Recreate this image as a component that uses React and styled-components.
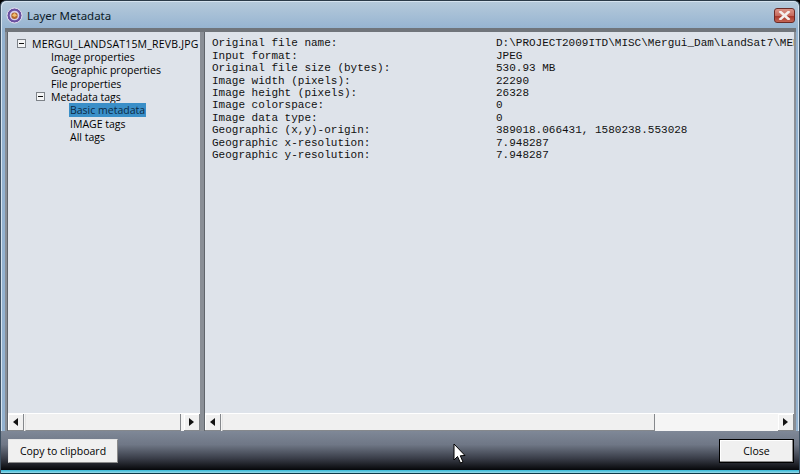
import React from "react";
import styled, { createGlobalStyle } from "styled-components";

const properties = [
  ["Original file name:", "D:\\PROJECT2009ITD\\MISC\\Mergui_Dam\\LandSat7\\MERGUI_LANDSAT15M_REVB.JPG"],
  ["Input format:", "JPEG"],
  ["Original file size (bytes):", "530.93 MB"],
  ["Image width (pixels):", "22290"],
  ["Image height (pixels):", "26328"],
  ["Image colorspace:", "0"],
  ["Image data type:", "0"],
  ["Geographic (x,y)-origin:", "389018.066431, 1580238.553028"],
  ["Geographic x-resolution:", "7.948287"],
  ["Geographic y-resolution:", "7.948287"],
];

const GlobalStyle = createGlobalStyle`
  html, body {
    margin: 0;
    padding: 0;
    background: #000;
    overflow: hidden;
  }
`;

const Window = styled.div`
  width: 800px;
  height: 474px;
  box-sizing: border-box;
  display: flex;
  flex-direction: column;
  font-family: "Open Sans", "Liberation Sans", sans-serif;
  font-size: 10.5px;
  color: #000;
  background: linear-gradient(#b6cadb 0, #93b2d0 30px, #93b2d0 100%);
  border-top: 1px solid #2b3a48;
  border-left: 1px solid #3d4f60;
  border-right: 1px solid #3d4f60;
  border-radius: 6px 6px 0 0;
  box-shadow: inset 1px 1px 0 #d5e3ef, inset -1px 0 0 #d5e3ef;
`;

const TitleBar = styled.div`
  height: 27px;
  box-sizing: border-box;
  flex: none;
  display: flex;
  align-items: center;
  padding: 2px 4px 0 5px;
  gap: 4px;
`;

const Title = styled.span`
  flex: 1;
  font-family: "Noto Sans", "Liberation Sans", sans-serif;
  font-size: 11.5px;
  color: #0c1a26;
`;

const CloseX = styled.div`
  width: 19px;
  height: 13px;
  border: 1px solid #6b2a26;
  border-radius: 3px;
  background: linear-gradient(#dd9488 0%, #c66a5e 50%, #a8362a 55%, #c46656 100%);
  display: flex;
  align-items: center;
  justify-content: center;
`;

const Body = styled.div`
  flex: 1;
  min-height: 0;
  margin: 0 3px 0 4px;
  padding: 0 2px;
  display: flex;
  gap: 4px;
  background: #8a8f96;
  border-top: 4px solid #70757b;
`;

const Pane = styled.div`
  flex: ${(p) => (p.$wide ? "1" : "none")};
  width: ${(p) => (p.$wide ? "auto" : "192px")};
  min-width: 0;
  display: flex;
  flex-direction: column;
  background: #dee3ea;
  border-left: 1px solid #60656b;
`;

const Content = styled.div`
  flex: 1;
  min-height: 0;
  overflow: hidden;
`;

const TreeRow = styled.div`
  height: 13.33px;
  display: flex;
  align-items: center;
  white-space: nowrap;
  padding-left: ${(p) => p.$indent}px;
`;

const Tree = styled(Content)`
  padding: 5px 0 0 9px;
`;

const Expander = styled.span`
  width: 7px;
  height: 7px;
  margin-right: 5px;
  border: 1px solid #7d8288;
  background: #f4f5f6;
  display: flex;
  align-items: center;
  justify-content: center;
  &::after {
    content: "";
    width: 5px;
    height: 1px;
    background: #111;
  }
`;

const Label = styled.span`
  padding: 0 1px;
  line-height: 14px;
  letter-spacing: ${(p) => (p.$caps ? "0.2px" : "0")};
  background: ${(p) => (p.$selected ? "#3a8fc8" : "transparent")};
  color: ${(p) => (p.$selected ? "#0c2a45" : "#000")};
`;

const Metadata = styled(Content)`
  padding: 5.3px 0 0 7px;
  font-family: "Liberation Mono", "Courier New", monospace;
  font-size: 11px;
  color: #111;
`;

const MetaRow = styled.div`
  height: 12.44px;
  line-height: 12.44px;
  display: flex;
  white-space: pre;
`;

const MetaKey = styled.span`
  width: 284px;
  flex: none;
`;

const ScrollBar = styled.div`
  height: 17px;
  flex: none;
  display: flex;
  background: #f5f5f5;
  border-top: 1px solid #ffffff;
`;

const ScrollButton = styled.div`
  width: 16px;
  flex: none;
  box-sizing: border-box;
  background: #f0f0f0;
  border-right: 1px solid #85888c;
  border-bottom: 1px solid #85888c;
  box-shadow: inset 1px 1px 0 #fff;
  display: flex;
  align-items: center;
  justify-content: center;
  &::after {
    content: "";
    border-top: 4px solid transparent;
    border-bottom: 4px solid transparent;
    border-left: ${(p) => (p.$right ? "5px solid #111" : "0")};
    border-right: ${(p) => (p.$right ? "0" : "5px solid #111")};
  }
`;

const Track = styled.div`
  flex: 1;
  display: flex;
`;

const Thumb = styled.div`
  width: ${(p) => p.$width}px;
  margin-left: 1px;
  box-sizing: border-box;
  background: #f0f0f0;
  border-left: 1px solid #e4e4e4;
  border-right: 1px solid #85888c;
  border-bottom: 1px solid #85888c;
`;

const Footer = styled.div`
  height: 39px;
  flex: none;
  padding: 8px 5px 0 7px;
  box-sizing: border-box;
  display: flex;
  justify-content: space-between;
  align-items: flex-start;
  position: relative;
  background: linear-gradient(#7f8897 0%, #6f7786 35%, #3a3e49 70%, #06070a 100%);
`;

const Button = styled.button`
  height: 24px;
  width: ${(p) => p.$width}px;
  padding: 0;
  font-family: "Open Sans", "Liberation Sans", sans-serif;
  font-size: 10.5px;
  color: #000;
  background: #f0f0f0;
  border: 1px solid ${(p) => (p.$default ? "#000" : "#e6e6e6")};
  border-right-color: ${(p) => (p.$default ? "#000" : "#8a8a8a")};
  border-bottom-color: ${(p) => (p.$default ? "#000" : "#8a8a8a")};
  box-shadow: ${(p) => (p.$default ? "inset -1px -1px 0 #8a8a8a, inset 1px 1px 0 #fff" : "none")};
`;

const Pointer = styled.svg`
  position: absolute;
  left: 452px;
  top: 12px;
`;

const BottomEdge = styled.div`
  height: 3px;
  flex: none;
  background: linear-gradient(#2fb7d6, #9ad9e8);
  border-bottom: 1px solid #0e3b49;
`;

const AppIcon = () => (
  <svg width="17" height="17" viewBox="0 0 17 17">
    <circle cx="8.5" cy="8.5" r="7.5" fill="#6a4fa0" stroke="#e8e4f2" strokeWidth="1" />
    <circle cx="8.5" cy="8.5" r="4.8" fill="#d7cfe8" />
    <circle cx="8.5" cy="8.8" r="3.2" fill="#b5692c" />
    <path d="M6 8.5 L8.5 6 L11 8.5 L8.5 10 Z" fill="#f0c070" />
  </svg>
);

const CloseGlyph = () => (
  <svg width="13" height="9" viewBox="0 0 13 9">
    <path d="M2.5 1 L10.5 8 M10.5 1 L2.5 8" stroke="#f4efee" strokeWidth="2.6" strokeLinecap="square" />
  </svg>
);

const Scroll = ({ thumb }) => (
  <ScrollBar>
    <ScrollButton />
    <Track>
      <Thumb $width={thumb} />
    </Track>
    <ScrollButton $right />
  </ScrollBar>
);

export default function App() {
  return (
    <>
      <GlobalStyle />
      <Window>
        <TitleBar>
          <AppIcon />
          <Title>Layer Metadata</Title>
          <CloseX>
            <CloseGlyph />
          </CloseX>
        </TitleBar>
        <Body>
          <Pane>
            <Tree>
              <TreeRow $indent={0}>
                <Expander />
                <Label $caps>MERGUI_LANDSAT15M_REVB.JPG</Label>
              </TreeRow>
              <TreeRow $indent={33}><Label>Image properties</Label></TreeRow>
              <TreeRow $indent={33}><Label>Geographic properties</Label></TreeRow>
              <TreeRow $indent={33}><Label>File properties</Label></TreeRow>
              <TreeRow $indent={19}>
                <Expander />
                <Label>Metadata tags</Label>
              </TreeRow>
              <TreeRow $indent={52}><Label $selected>Basic metadata</Label></TreeRow>
              <TreeRow $indent={52}><Label>IMAGE tags</Label></TreeRow>
              <TreeRow $indent={52}><Label>All tags</Label></TreeRow>
            </Tree>
            <Scroll thumb={156} />
          </Pane>
          <Pane $wide>
            <Metadata>
              {properties.map(([key, value]) => (
                <MetaRow key={key}>
                  <MetaKey>{key}</MetaKey>
                  <span>{value}</span>
                </MetaRow>
              ))}
            </Metadata>
            <Scroll thumb={433} />
          </Pane>
        </Body>
        <Footer>
          <Button $width={110}>Copy to clipboard</Button>
          <Button $width={75} $default>Close</Button>
          <Pointer width="13" height="21" viewBox="0 0 13 21">
            <path d="M1 1 V17 L4.5 13.5 L7.5 20 L10 19 L7.3 12.8 L12 12.5 Z" fill="#fff" stroke="#000" strokeWidth="1" />
          </Pointer>
        </Footer>
        <BottomEdge />
      </Window>
    </>
  );
}
